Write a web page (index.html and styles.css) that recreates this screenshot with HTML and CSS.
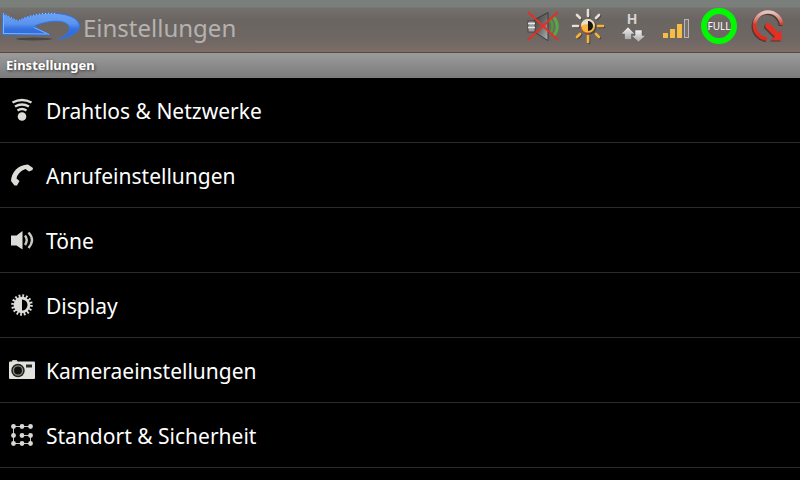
FILE: index.html
```html
<!DOCTYPE html>
<html lang="de">
<head>
    <meta charset="UTF-8">
    <meta name="viewport" content="width=device-width, initial-scale=1.0">
    <title>Einstellungen</title>
    <link rel="stylesheet" href="styles.css">
</head>
<body>

    <header class="topbar">
        <button class="back" type="button" aria-label="Zurück">
            <svg width="82" height="52" viewBox="0 0 82 52">
                <defs>
                    <linearGradient id="blue" x1="0" y1="0" x2="0" y2="1">
                        <stop offset="0" stop-color="#6ba2f4"/>
                        <stop offset="0.4" stop-color="#5a94ee"/>
                        <stop offset="0.6" stop-color="#3572e0"/>
                        <stop offset="1" stop-color="#2b66d6"/>
                    </linearGradient>
                </defs>
                <ellipse cx="34" cy="39" rx="18" ry="1.5" fill="#4a4644"/>
                <path d="M2.5 13.5 L18 21 C28 15 44 12.5 57 13.5 C70 14.5 79 19 79.5 26 C79.5 33 70 37 58 39.5 C66 36 70 32 69 27 C68 22 60 20.5 51 21.5 C44 22.5 38 24 34 26.5 L50 35 L2.5 34.5 Z" fill="url(#blue)" stroke="#3474e6" stroke-width="1"/>
                <path d="M3.5 34 V15 M47 34 L4 33.5 M34 27.5 L49 34.5" fill="none" stroke="#78b4ff" stroke-width="1"/>
                <path d="M3 13.5 L18 21 C28 15 44 12.5 57 13.5" fill="none" stroke="#b9cfd6" stroke-width="1" stroke-dasharray="1 2"/>
            </svg>
        </button>
        <h1 class="title">Einstellungen</h1>

        <div class="toggles">
            <button class="toggle" type="button" aria-label="Ton aus">
                <svg width="44" height="52" viewBox="0 0 44 52">
                    <defs>
                        <linearGradient id="cone" x1="0" y1="0" x2="1" y2="1">
                            <stop offset="0" stop-color="#3c3c3c"/>
                            <stop offset="0.5" stop-color="#666"/>
                            <stop offset="1" stop-color="#b8b8b8"/>
                        </linearGradient>
                    </defs>
                    <path d="M12 20 L26 12.5 V40.5 L12 32 Z" fill="url(#cone)" stroke="#3b3939"/>
                    <rect x="6" y="21" width="7" height="11" fill="#9a9a9a" stroke="#444"/>
                    <path d="M6 23.5 H13 M6 27.5 H13" stroke="#e8e8e8" stroke-width="1.5"/>
                    <path d="M28.5 20 Q32.5 26.5 28.5 33" fill="none" stroke="#4e9a3d" stroke-width="2.5"/>
                    <path d="M31.5 17 Q39 26.5 31.5 36" fill="none" stroke="#58a845" stroke-width="3"/>
                    <path d="M6 12 L36 40 M36 12 L6 40" stroke="#e43023" stroke-width="2"/>
                </svg>
            </button>
            <button class="toggle" type="button" aria-label="Helligkeit">
                <svg width="44" height="52" viewBox="0 0 44 52">
                    <g transform="translate(22 26)" stroke-width="2.6">
                        <path d="M0 -16 V-10 M0 10 V16 M-15 0 H-10 M10 0 H15 M-11 -11 L-8 -8 M11 -11 L8 -8 M-11 11 L-8 8 M11 11 L8 8" transform="translate(1 1)" stroke="#4a4644" stroke-linecap="round"/>
                        <path d="M0 -16 V-10 M-15 0 H-10 M-11 -11 L-8 -8 M11 -11 L8 -8" stroke="#e4dfd4" stroke-linecap="round"/>
                        <path d="M0 10 V16 M10 0 H15 M-11 11 L-8 8 M11 11 L8 8" stroke="#f5b13a" stroke-linecap="round"/>
                        <circle cx="1" cy="1" r="7.5" fill="#4a4644"/>
                        <circle r="7" fill="#f8b53c"/>
                        <path d="M-7 0 A7 7 0 0 1 7 0 L5 -1 A5 5 0 0 0 0 -4 V-2 Q-4 -2 -7 0 Z" fill="#e6dfd0"/>
                        <path d="M0 -5 A5 5 0 0 1 0 5 Z" fill="#171412"/>
                        <path d="M-7 1 A7 7 0 0 0 2 6.8" fill="none" stroke="#e9542a" stroke-width="1"/>
                    </g>
                </svg>
            </button>
            <button class="toggle" type="button" aria-label="Mobile Daten">
                <svg width="44" height="52" viewBox="0 0 44 52">
                    <defs>
                        <linearGradient id="up" x1="0" y1="0" x2="0" y2="1">
                            <stop offset="0" stop-color="#f4f4f4"/>
                            <stop offset="1" stop-color="#a8a6a6"/>
                        </linearGradient>
                    </defs>
                    <text class="net" x="17" y="24">H</text>
                    <path d="M18 27 L25 34 H21.5 V39.5 H14.5 V34 H11 Z" fill="url(#up)" stroke="#5a5655" stroke-width="0.5"/>
                    <path d="M28.5 42 L35.5 35.5 H32 V30 H25 V35.5 H21.5 Z" fill="url(#up)" stroke="#5a5655" stroke-width="0.5"/>
                </svg>
            </button>
            <button class="toggle" type="button" aria-label="Empfang">
                <svg width="44" height="52" viewBox="0 0 44 52">
                    <path d="M9 33 H14 V38 H9 Z M16 29 H21 V38 H16 Z M23 24 H28 V38 H23 Z" fill="#f6bd45"/>
                    <rect x="30.5" y="19.5" width="4" height="18" fill="#777270" stroke="#b9b6b5"/>
                </svg>
            </button>
            <button class="toggle" type="button" aria-label="Akku">
                <svg width="44" height="52" viewBox="0 0 44 52">
                    <circle cx="21" cy="26" r="15" fill="none" stroke="#00f800" stroke-width="6"/>
                    <text class="full" x="21" y="30" text-anchor="middle">FULL</text>
                </svg>
            </button>
            <button class="toggle" type="button" aria-label="Aktualisieren">
                <svg width="52" height="52" viewBox="0 0 52 52">
                    <defs>
                        <linearGradient id="red" x1="0" y1="0" x2="0" y2="1">
                            <stop offset="0" stop-color="#e8c4be"/>
                            <stop offset="0.3" stop-color="#d9786c"/>
                            <stop offset="0.45" stop-color="#e03427"/>
                            <stop offset="1" stop-color="#e2281c"/>
                        </linearGradient>
                    </defs>
                    <path d="M39.5 25 A13.5 13.5 0 1 0 25 39" transform="translate(-1 1)" fill="none" stroke="#4a3a38" stroke-width="4"/>
                    <path d="M39.5 25 A13.5 13.5 0 1 0 25 39" fill="none" stroke="url(#red)" stroke-width="3.6"/>
                    <g transform="translate(-1 1)">
                        <path d="M26 26 L35 35" stroke="#4a3a38" stroke-width="6" stroke-linecap="round"/>
                        <path d="M39.5 30 V40.5 H29 Z" fill="#4a3a38"/>
                    </g>
                    <path d="M26 26 L35 35" stroke="#e43023" stroke-width="5.5" stroke-linecap="round"/>
                    <path d="M39.5 30 V40.5 H29 Z" fill="#e43023"/>
                </svg>
            </button>
        </div>
    </header>

    <h2 class="section">Einstellungen</h2>

    <nav>
        <ul class="list">
            <li>
                <a class="row" href="#wireless">
                    <svg class="icon" viewBox="0 0 28 28">
                        <circle cx="14" cy="20.5" r="4.3" fill="#dcdcd8"/>
                        <path d="M4.5 6.5 Q14 1.5 23.5 6.5 M7 10.5 Q14 6.5 21 10.5 M9.5 14.5 Q14 11.5 18.5 14.5" fill="none" stroke="#dcdcd8" stroke-width="2.4"/>
                    </svg>
                    <span class="label">Drahtlos &amp; Netzwerke</span>
                </a>
            </li>
            <li>
                <a class="row" href="#calls">
                    <svg class="icon" viewBox="0 0 28 28">
                        <path d="M3 20 C3.5 11 10 4 20 3.5 L25 7 L24.5 9 L21 10.5 L17.5 8 C13 9.5 9.5 13 8.5 17.5 L11.5 20 L9 24.5 L6.5 24.5 Z" fill="#dcdcd8"/>
                    </svg>
                    <span class="label">Anrufeinstellungen</span>
                </a>
            </li>
            <li>
                <a class="row" href="#sound">
                    <svg class="icon" viewBox="0 0 28 28">
                        <path d="M3 9.5 H8.5 L14.5 5 V23.5 L8.5 19.5 H3 Z" fill="#dcdcd8"/>
                        <path d="M17 9.5 Q20.5 14 17 19 M20.5 6.5 Q27.5 14 20.5 22" fill="none" stroke="#c8c8c4" stroke-width="2.4"/>
                    </svg>
                    <span class="label">Töne</span>
                </a>
            </li>
            <li>
                <a class="row" href="#display">
                    <svg class="icon" viewBox="0 0 28 28">
                        <circle cx="14" cy="14" r="9" fill="none" stroke="#dcdcd8" stroke-width="3.5" stroke-dasharray="1.734 1.8"/>
                        <circle cx="14" cy="14" r="8.3" fill="#dcdcd8"/>
                        <path d="M14 8.5 A5.5 5.5 0 0 1 14 19.5 Z" fill="#000"/>
                    </svg>
                    <span class="label">Display</span>
                </a>
            </li>
            <li>
                <a class="row" href="#camera">
                    <svg class="icon" viewBox="0 0 28 28">
                        <path d="M4 6 V5 Q4 4 5 4 H8.5 Q9.5 4 9.5 6 Z" fill="#c4c4c0"/>
                        <rect x="1" y="5.5" width="26" height="17.5" rx="1" fill="#e2e2de"/>
                        <circle cx="10" cy="14.5" r="6.7" fill="#24221f"/>
                        <circle cx="10" cy="14.5" r="4.6" fill="#111" stroke="#8a8884" stroke-width="1.3"/>
                        <rect x="18" y="8.5" width="6" height="3" fill="#2c2a28"/>
                    </svg>
                    <span class="label">Kameraeinstellungen</span>
                </a>
            </li>
            <li>
                <a class="row" href="#security">
                    <svg class="icon" viewBox="0 0 28 28">
                        <path d="M22.5 5.5 H5.5 V22.5 H22.5 V14.5 H14" fill="none" stroke="#c8c8c4" stroke-width="1"/>
                        <g fill="#d8d8d4">
                            <circle cx="5.5" cy="5.5" r="2.4"/>
                            <circle cx="14" cy="5.5" r="2.4"/>
                            <circle cx="22.5" cy="5.5" r="2.4"/>
                            <circle cx="5.5" cy="14.5" r="2.4"/>
                            <circle cx="14" cy="14.5" r="2.4"/>
                            <circle cx="22.5" cy="14.5" r="2.4"/>
                            <circle cx="5.5" cy="22.5" r="2.4"/>
                            <circle cx="14" cy="22.5" r="2.4"/>
                            <circle cx="22.5" cy="22.5" r="2.4"/>
                        </g>
                    </svg>
                    <span class="label">Standort &amp; Sicherheit</span>
                </a>
            </li>
        </ul>
    </nav>

</body>
</html>
```
FILE: styles.css
```css
* {
  box-sizing: border-box;
}

body {
  margin: 0;
  background-color: #000;
  color: #fff;
  font-family: "Noto Sans", "Open Sans", sans-serif;
}

svg {
  display: block;
}

.topbar {
  display: flex;
  align-items: center;
  height: 53px;
  padding-right: 6px;
  border-bottom: 1px solid #524844;
  background: linear-gradient(#7b7f7c 0, #7b7f7c 7px, #73706e 8px, #6b6562 20px, #6e6764 40px, #7e6e66 52px);
}

.back,
.toggle {
  padding: 0;
  border: 0;
  background: none;
}

.title {
  margin: 0;
  padding: 4px 0 0 1px;
  font-size: 24px;
  font-weight: normal;
  line-height: 32px;
  color: #b5b2b0;
}

.toggles {
  display: flex;
  margin-left: auto;
}

.net {
  font: bold 14px "Liberation Sans", sans-serif;
  fill: #d6d4d3;
}

.full {
  font: 10px "Noto Sans", sans-serif;
  fill: #fff;
}

.section {
  margin: 0;
  padding: 0 6px;
  font-size: 13px;
  font-weight: bold;
  line-height: 25px;
  background: linear-gradient(#9b9b9b, #7b7b7b);
  text-shadow: 1px 1px 3px #333;
}

.list {
  margin: 0;
  padding: 0;
  list-style: none;
}

.row {
  display: flex;
  align-items: center;
  gap: 10px;
  height: 65px;
  padding: 0 8px;
  border-bottom: 1px solid #2c2c2c;
  color: #fff;
  font-size: 21px;
  text-decoration: none;
}

.label {
  padding-top: 2px;
}

.icon {
  flex: none;
  width: 28px;
  height: 28px;
}
```
